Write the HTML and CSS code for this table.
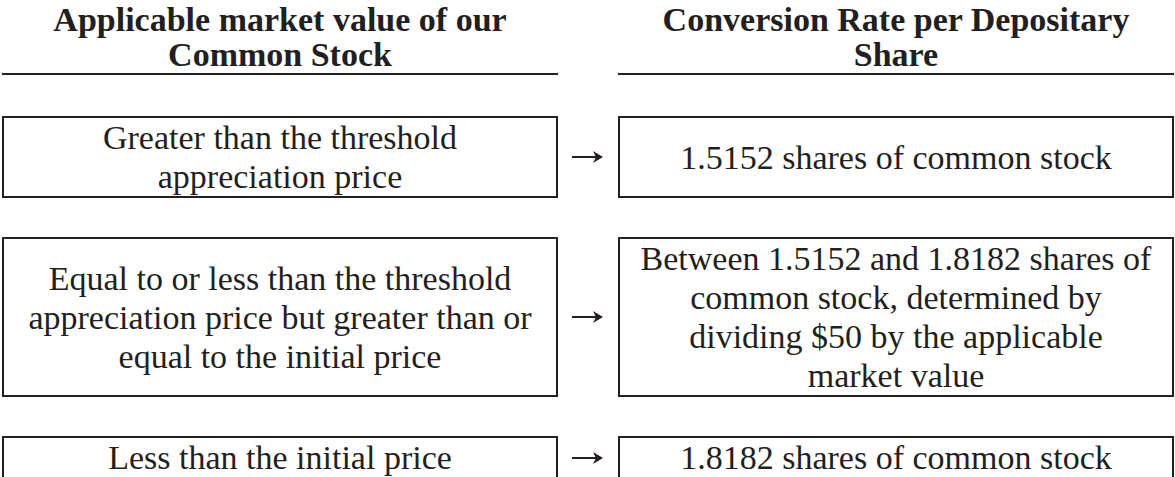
FILE: index.html
```html
<!DOCTYPE html>
<html lang="en">
<head>
<meta charset="utf-8">
<link rel="stylesheet" href="styles.css">
</head>
<body>
<div class="table">
  <div class="head">Applicable market value of our<br>Common Stock</div>
  <div class="spacer"></div>
  <div class="head">Conversion Rate per Depositary<br>Share</div>

  <div class="box">Greater than the threshold<br>appreciation price</div>
  <div class="arrow"><svg width="32" height="14" viewBox="0 0 32 14"><line x1="0" y1="7" x2="28" y2="7" stroke="#231f20" stroke-width="2"/><path d="M21 1 L31 7 L21 13 L24 7 Z" fill="#231f20"/></svg></div>
  <div class="box">1.5152 shares of common stock</div>

  <div class="box">Equal to or less than the threshold<br>appreciation price but greater than or<br>equal to the initial price</div>
  <div class="arrow"><svg width="32" height="14" viewBox="0 0 32 14"><line x1="0" y1="7" x2="28" y2="7" stroke="#231f20" stroke-width="2"/><path d="M21 1 L31 7 L21 13 L24 7 Z" fill="#231f20"/></svg></div>
  <div class="box">Between 1.5152 and 1.8182 shares of<br>common stock, determined by<br>dividing $50 by the applicable<br>market value</div>

  <div class="box">Less than the initial price</div>
  <div class="arrow"><svg width="32" height="14" viewBox="0 0 32 14"><line x1="0" y1="7" x2="28" y2="7" stroke="#231f20" stroke-width="2"/><path d="M21 1 L31 7 L21 13 L24 7 Z" fill="#231f20"/></svg></div>
  <div class="box">1.8182 shares of common stock</div>
</div>
</body>
</html>
```
FILE: styles.css
```css
html, body {
  margin: 0;
  padding: 0;
  background: #ffffff;
}
body {
  font-family: "Liberation Serif", "Times New Roman", serif;
  color: #231f20;
}
.table {
  display: grid;
  grid-template-columns: 556px 60px 556px;
  row-gap: 39px;
  padding: 2px 0 0 2px;
}
.head {
  font-weight: bold;
  font-size: 34px;
  line-height: 35px;
  text-align: center;
  border-bottom: 2px solid #231f20;
  padding-bottom: 1px;
  margin-bottom: 2px;
}
.box {
  border: 2px solid #231f20;
  font-size: 34px;
  line-height: 39px;
  text-align: center;
  display: flex;
  align-items: center;
  justify-content: center;
}
.arrow {
  display: flex;
  align-items: center;
  justify-content: center;
}
.arrow svg {
  display: block;
}
```
